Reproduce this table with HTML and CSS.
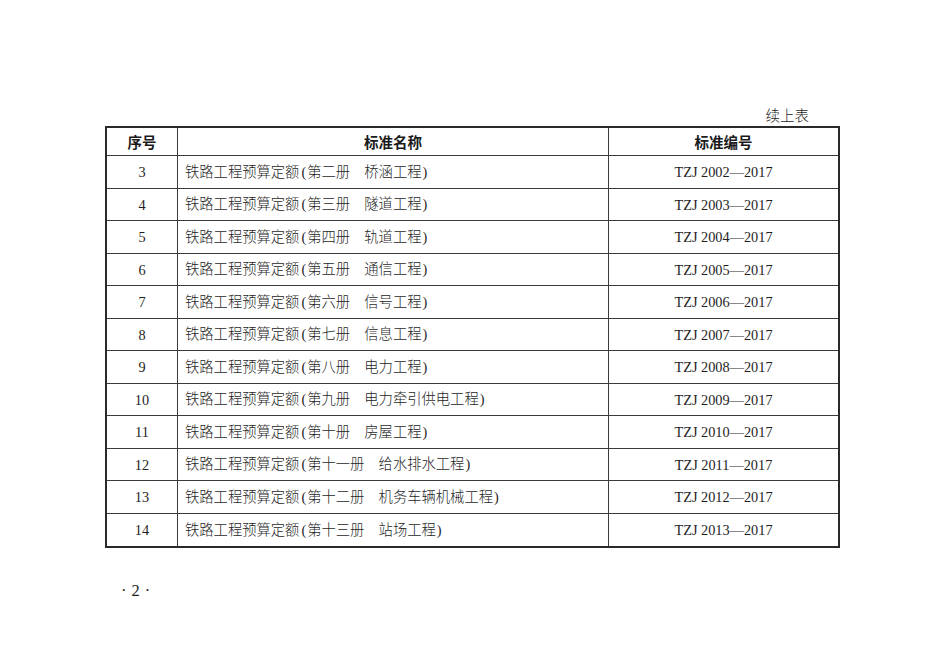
FILE: index.html
```html
<!DOCTYPE html>
<html lang="zh-CN">
<head>
<meta charset="utf-8">
<title>续上表</title>
<link rel="stylesheet" href="styles.css">
</head>
<body>
<div class="page">
  <div class="caption">续上表</div>
  <table class="std">
    <colgroup>
      <col class="c-no">
      <col class="c-name">
      <col class="c-code">
    </colgroup>
    <thead>
      <tr><th>序号</th><th>标准名称</th><th>标准编号</th></tr>
    </thead>
    <tbody>
      <tr><td class="no">3</td><td class="name">铁路工程预算定额<span class="po">(</span>第二册　桥涵工程<span class="pc">)</span></td><td class="code">TZJ 2002—2017</td></tr>
      <tr><td class="no">4</td><td class="name">铁路工程预算定额<span class="po">(</span>第三册　隧道工程<span class="pc">)</span></td><td class="code">TZJ 2003—2017</td></tr>
      <tr><td class="no">5</td><td class="name">铁路工程预算定额<span class="po">(</span>第四册　轨道工程<span class="pc">)</span></td><td class="code">TZJ 2004—2017</td></tr>
      <tr><td class="no">6</td><td class="name">铁路工程预算定额<span class="po">(</span>第五册　通信工程<span class="pc">)</span></td><td class="code">TZJ 2005—2017</td></tr>
      <tr><td class="no">7</td><td class="name">铁路工程预算定额<span class="po">(</span>第六册　信号工程<span class="pc">)</span></td><td class="code">TZJ 2006—2017</td></tr>
      <tr><td class="no">8</td><td class="name">铁路工程预算定额<span class="po">(</span>第七册　信息工程<span class="pc">)</span></td><td class="code">TZJ 2007—2017</td></tr>
      <tr><td class="no">9</td><td class="name">铁路工程预算定额<span class="po">(</span>第八册　电力工程<span class="pc">)</span></td><td class="code">TZJ 2008—2017</td></tr>
      <tr><td class="no">10</td><td class="name">铁路工程预算定额<span class="po">(</span>第九册　电力牵引供电工程<span class="pc">)</span></td><td class="code">TZJ 2009—2017</td></tr>
      <tr><td class="no">11</td><td class="name">铁路工程预算定额<span class="po">(</span>第十册　房屋工程<span class="pc">)</span></td><td class="code">TZJ 2010—2017</td></tr>
      <tr><td class="no">12</td><td class="name">铁路工程预算定额<span class="po">(</span>第十一册　给水排水工程<span class="pc">)</span></td><td class="code">TZJ 2011—2017</td></tr>
      <tr><td class="no">13</td><td class="name">铁路工程预算定额<span class="po">(</span>第十二册　机务车辆机械工程<span class="pc">)</span></td><td class="code">TZJ 2012—2017</td></tr>
      <tr><td class="no">14</td><td class="name">铁路工程预算定额<span class="po">(</span>第十三册　站场工程<span class="pc">)</span></td><td class="code">TZJ 2013—2017</td></tr>
    </tbody>
  </table>
  <div class="folio"><span>·</span><span>2</span><span>·</span></div>
</div>
</body>
</html>
```

FILE: styles.css
```css
html, body {
  margin: 0;
  padding: 0;
  background: #ffffff;
}

body {
  color: #1e1e1e;
  font-family: "Liberation Serif", "Noto Sans CJK SC", serif;
}

.page {
  width: 733px;
  padding: 104px 0 0 105px;
}

.caption {
  font-family: "Noto Sans CJK SC", sans-serif;
  font-weight: 300;
  font-size: 14.5px;
  line-height: 21px;
  text-align: right;
  padding-right: 29px;
}

.std {
  margin-top: 1px;
  width: 733px;
  table-layout: fixed;
  border-collapse: separate;
  border-spacing: 0;
  border: 2px solid #2a2a2a;
}

.c-no { width: 71px; }
.c-name { width: 431px; }
.c-code { width: 229px; }

.std th,
.std td {
  padding: 0;
  border-right: 1px solid #3a3a3a;
  border-bottom: 1px solid #3a3a3a;
  vertical-align: middle;
  white-space: nowrap;
  line-height: 18px;
}

.std th:last-child,
.std td:last-child {
  border-right: none;
}

.std tbody tr:last-child td {
  border-bottom: none;
}

.std thead tr {
  height: 28px;
}

.std tbody tr {
  height: 32.5px;
}

.std th {
  font-family: "Noto Sans CJK SC", sans-serif;
  font-weight: 700;
  font-size: 14.5px;
  text-align: center;
  color: #1a1a1a;
}

.std td {
  font-size: 14.3px;
  font-weight: 300;
}

.no {
  text-align: center;
  padding-top: 1px !important;
}

.name {
  text-align: left;
  padding-left: 7px !important;
}

.po {
  margin: 0 1px 0 2px;
}

.pc {
  margin-left: 1px;
}

.code {
  text-align: center;
  font-size: 14px;
  padding-top: 1px !important;
}

.folio {
  display: flex;
  gap: 5px;
  margin-top: 33px;
  padding-left: 16px;
  font-size: 16.5px;
  line-height: 20px;
}
```
